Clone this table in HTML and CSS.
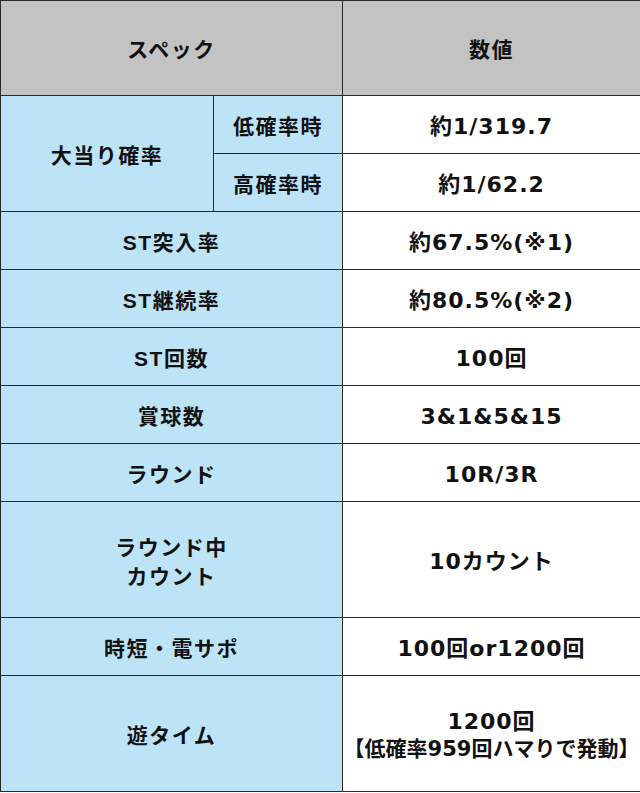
FILE: index.html
```html
<!DOCTYPE html>
<html lang="ja">
<head>
<meta charset="utf-8">
<link rel="stylesheet" href="styles.css">
</head>
<body>
<table class="spec">
  <colgroup>
    <col class="c1">
    <col class="c2">
    <col class="c3">
  </colgroup>
  <tr class="r-head">
    <th colspan="2" class="head">スペック</th>
    <th class="head">数値</th>
  </tr>
  <tr class="r-std">
    <th rowspan="2" class="label">大当り確率</th>
    <th class="label">低確率時</th>
    <td class="val">約1/319.7</td>
  </tr>
  <tr class="r-std">
    <th class="label">高確率時</th>
    <td class="val">約1/62.2</td>
  </tr>
  <tr class="r-std">
    <th colspan="2" class="label">ST突入率</th>
    <td class="val">約67.5%(※1)</td>
  </tr>
  <tr class="r-std">
    <th colspan="2" class="label">ST継続率</th>
    <td class="val">約80.5%(※2)</td>
  </tr>
  <tr class="r-std">
    <th colspan="2" class="label">ST回数</th>
    <td class="val">100回</td>
  </tr>
  <tr class="r-std">
    <th colspan="2" class="label">賞球数</th>
    <td class="val">3&amp;1&amp;5&amp;15</td>
  </tr>
  <tr class="r-std">
    <th colspan="2" class="label">ラウンド</th>
    <td class="val">10R/3R</td>
  </tr>
  <tr class="r-tall">
    <th colspan="2" class="label two">ラウンド中<br>カウント</th>
    <td class="val">10カウント</td>
  </tr>
  <tr class="r-std">
    <th colspan="2" class="label">時短・電サポ</th>
    <td class="val">100回or1200回</td>
  </tr>
  <tr class="r-tall">
    <th colspan="2" class="label">遊タイム</th>
    <td class="val two">1200回<br><span class="note">【低確率959回ハマりで発動】</span></td>
  </tr>
</table>
</body>
</html>
```

FILE: styles.css
```css
html, body {
  margin: 0;
  padding: 0;
  background: #ffffff;
}

.spec {
  border-collapse: collapse;
  width: 640px;
  table-layout: fixed;
  font-family: "Liberation Sans", "Noto Sans CJK JP", sans-serif;
  font-weight: bold;
  font-size: 21px;
  letter-spacing: 1.5px;
  color: #111111;
}

.c1 { width: 213px; }
.c2 { width: 129px; }
.c3 { width: 298px; }

.spec th,
.spec td {
  border: 1px solid #2a2a2a;
  padding: 4px 0 0 0;
  text-align: center;
  vertical-align: middle;
  line-height: 28px;
  font-weight: bold;
}

.spec .two {
  line-height: 29px;
}

.r-head { height: 95px; }
.r-std { height: 58px; }
.r-tall { height: 116px; }

.head {
  background: #c3c3c3;
}

.label {
  background: #bde3f7;
}

.spec .val {
  background: #ffffff;
  font-family: "DejaVu Sans", "Noto Sans CJK JP", sans-serif;
  font-size: 22px;
  letter-spacing: 1px;
}

.spec .val.two {
  line-height: 27px;
}

.note {
  font-size: 21px;
  letter-spacing: 0;
}
```
